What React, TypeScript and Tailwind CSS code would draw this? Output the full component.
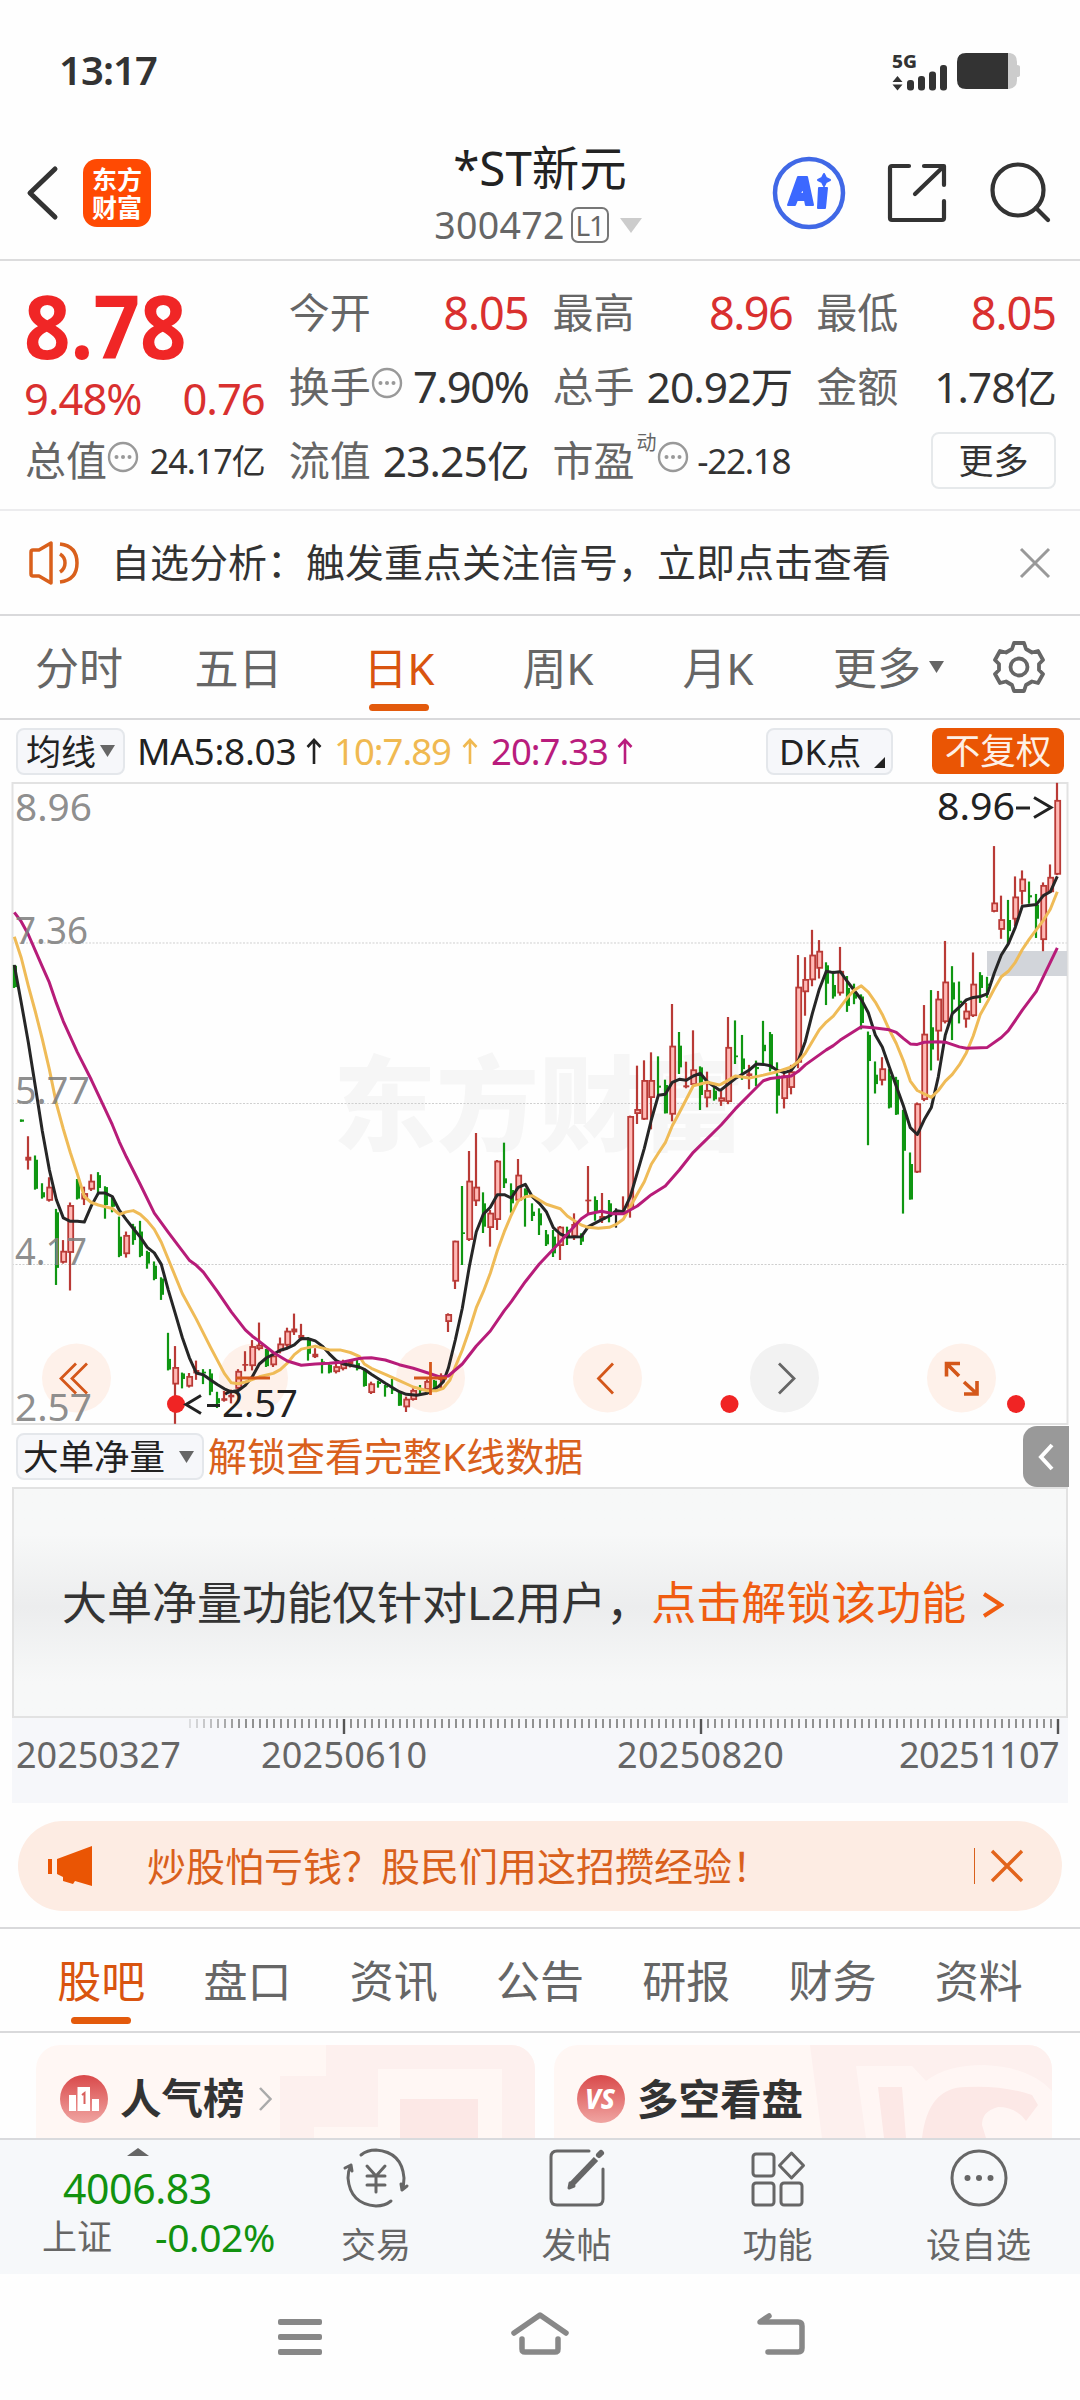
import type { ReactNode } from "react";
import { clsx } from "clsx";

type Candle = [
  color: "r" | "g" | "k",
  high: number,
  low: number,
  top: number,
  bottom: number,
];

interface Segment {
  first: number;
  x0: number;
  y0: number;
  sy: number;
  candles: Candle[];
  ma5: string;
  ma10: string;
  ma20: string;
}

// The history is stored in three pages, every page with its own origin and scale
const segments: Segment[] = [
  {
    first: 0,
    x0: 0,
    y0: 770,
    sy: 2.34,
    candles: [
      ["g", 456, 510, 458, 508], ["g", 818, 823, 818, 823], ["r", 857, 935, 905, 914],
      ["g", 902, 982, 912, 980], ["g", 967, 1003, 988, 1000], ["r", 953, 1010, 975, 1008],
      ["g", 1027, 1205, 1035, 1165], ["r", 1100, 1155, 1125, 1153], ["r", 1012, 1218, 1018, 1130],
      ["g", 957, 1005, 962, 1003], ["r", 975, 1018, 990, 1005], ["r", 946, 985, 961, 982],
      ["g", 941, 995, 948, 978], ["g", 974, 1050, 976, 1018], ["g", 1000, 1035, 1010, 1022],
      ["g", 1045, 1140, 1092, 1137], ["r", 1080, 1141, 1088, 1133], ["g", 1062, 1111, 1068, 1100],
      ["g", 1055, 1140, 1080, 1137], ["g", 1125, 1167, 1128, 1155], ["g", 1150, 1194, 1160, 1191],
      ["g", 1187, 1240, 1190, 1228], ["g", 1317, 1405, 1378, 1403], ["r", 1348, 1530, 1397, 1438],
      ["g", 1410, 1447, 1412, 1425], ["r", 1411, 1445, 1418, 1443], ["r", 1382, 1427, 1404, 1412],
      ["g", 1402, 1437, 1408, 1412], ["g", 1402, 1463, 1412, 1455], ["g", 1455, 1493, 1470, 1482],
      ["r", 1453, 1478, 1470, 1476], ["r", 1450, 1482, 1462, 1468], ["r", 1402, 1450, 1406, 1448],
      ["r", 1360, 1407, 1390, 1394], ["r", 1334, 1405, 1348, 1395], ["r", 1293, 1358, 1345, 1355],
      ["g", 1355, 1397, 1355, 1395], ["r", 1365, 1397, 1370, 1393], ["r", 1328, 1365, 1342, 1360],
      ["r", 1305, 1350, 1312, 1347], ["r", 1272, 1322, 1307, 1316], ["r", 1296, 1335, 1322, 1330],
      ["g", 1327, 1382, 1330, 1366], ["r", 1353, 1376, 1366, 1374], ["g", 1378, 1412, 1384, 1388],
      ["g", 1388, 1412, 1392, 1410], ["r", 1388, 1412, 1395, 1409], ["r", 1380, 1405, 1385, 1402],
      ["r", 1380, 1398, 1383, 1390], ["g", 1380, 1405, 1388, 1402],
    ],
    ma5: "43,456 64,545 85,637 106,740 127,845 148,935 169,1005 190,1048 211,1056 232,1056 253,1058 274,1020 295,990 316,990 337,998 358,1030 379,1052 400,1073 421,1093 442,1117 463,1130 484,1157 505,1217 526,1272 547,1328 568,1375 589,1411 610,1415 631,1427 652,1438 673,1448 694,1455 715,1452 736,1440 757,1420 778,1390 799,1376 820,1367 841,1358 862,1353 883,1345 904,1330 925,1331 946,1336 967,1348 988,1366 1009,1382 1030,1390 1051,1393 1078,1397",
    ma10: "43,390 64,440 85,505 106,565 127,630 148,700 169,780 190,840 211,895 232,945 253,998 274,1012 295,1018 337,1026 358,1040 379,1034 400,1031 421,1040 442,1055 463,1075 484,1105 505,1145 547,1225 589,1285 631,1350 673,1412 694,1434 715,1436 736,1432 778,1420 820,1412 841,1403 862,1388 883,1368 904,1355 946,1348 988,1357 1020,1357 1051,1363 1078,1372",
    ma20: "43,333 64,355 85,385 127,460 148,497 169,545 190,588 232,660 274,725 316,795 337,830 358,870 379,905 421,970 463,1037 505,1082 547,1125 568,1147 589,1159 610,1175 652,1220 694,1268 736,1310 757,1325 778,1337 820,1363 862,1383 904,1393 946,1390 988,1388 1030,1385 1078,1377",
  },
  {
    first: 50,
    x0: 360,
    y0: 970,
    sy: 3,
    candles: [
      ["g", 1200, 1250, 1202, 1248], ["r", 1235, 1272, 1240, 1269], ["g", 1232, 1253, 1236, 1242],
      ["g", 1245, 1280, 1248, 1252], ["g", 1227, 1272, 1255, 1262], ["g", 1268, 1307, 1268, 1307],
      ["r", 1280, 1326, 1286, 1312], ["r", 1255, 1292, 1260, 1290], ["g", 1245, 1275, 1258, 1262],
      ["r", 1228, 1262, 1233, 1260], ["g", 1230, 1260, 1232, 1256], ["r", 1210, 1256, 1216, 1230],
      ["r", 1030, 1086, 1032, 1056], ["r", 812, 957, 812, 935], ["g", 648, 885, 787, 792],
      ["r", 543, 813, 632, 810], ["r", 489, 708, 650, 694], ["g", 667, 789, 700, 770],
      ["r", 720, 830, 728, 774], ["r", 570, 780, 572, 750], ["g", 518, 654, 625, 640],
      ["g", 640, 728, 660, 700], ["r", 567, 695, 614, 692], ["g", 655, 770, 658, 675],
      ["g", 700, 753, 725, 738], ["g", 715, 795, 730, 766], ["g", 780, 828, 793, 823],
      ["g", 780, 861, 800, 850], ["r", 768, 870, 770, 828], ["g", 770, 825, 780, 800],
      ["r", 730, 810, 762, 800], ["g", 790, 825, 797, 815], ["r", 588, 735, 689, 694],
      ["g", 679, 752, 690, 725], ["r", 669, 759, 738, 750], ["g", 690, 757, 700, 740],
      ["k", 715, 773, 722, 727], ["r", 679, 735, 722, 730], ["r", 437, 743, 438, 718],
      ["r", 287, 462, 417, 432], ["r", 271, 450, 330, 449], ["r", 247, 478, 330, 384],
      ["g", 259, 375, 347, 353], ["g", 329, 430, 345, 430], ["r", 102, 454, 227, 434],
      ["g", 186, 312, 227, 292], ["r", 275, 355, 346, 352], ["r", 181, 350, 298, 345],
      ["g", 289, 420, 292, 375], ["r", 305, 412, 360, 385], ["g", 350, 392, 362, 388],
    ],
    ma5: "13,1198 34,1213 76,1240 118,1265 139,1273 170,1276 202,1270 235,1250 250,1235 265,1195 286,1110 307,1015 328,890 349,785 370,733 391,712 412,674 433,674 454,684 475,652 496,643 517,680 538,700 559,725 580,773 601,792 622,801 664,800 685,770 727,748 748,738 769,722 790,725 811,680 832,608 853,535 874,450 895,376 916,373 937,337 958,328 979,331 1000,318 1021,310 1042,335 1078,360",
    ma10: "13,1182 34,1195 76,1213 118,1232 160,1251 202,1262 230,1262 250,1255 270,1230 286,1190 307,1140 328,1080 349,1013 370,965 391,910 412,842 433,785 454,735 475,692 496,680 517,677 538,690 559,703 601,716 622,738 643,752 664,765 685,772 715,775 748,772 769,763 790,748 811,710 832,672 853,635 874,583 895,550 916,518 937,467 958,428 979,388 1000,347 1042,337 1078,345",
    ma20: "13,1164 34,1163 76,1170 118,1184 160,1195 202,1208 244,1222 265,1218 307,1182 349,1128 391,1083 433,1022 454,995 496,935 538,882 580,838 622,792 664,746 685,732 724,724 760,731 790,731 832,708 874,674 916,648 958,600 1000,547 1042,506 1078,470",
  },
  {
    first: 101,
    x0: 720,
    y0: 770,
    sy: 2.34,
    candles: [
      ["r", 750, 786, 766, 776], ["r", 578, 782, 648, 777], ["g", 586, 688, 668, 672],
      ["g", 620, 725, 675, 700], ["r", 690, 747, 710, 716], ["g", 680, 740, 695, 700],
      ["g", 587, 688, 643, 658], ["g", 613, 705, 618, 700], ["g", 684, 804, 715, 762],
      ["r", 708, 792, 715, 770], ["r", 690, 759, 705, 744], ["r", 433, 698, 507, 685],
      ["r", 438, 575, 489, 520], ["r", 374, 506, 432, 492], ["r", 398, 488, 423, 465],
      ["g", 450, 550, 457, 500], ["g", 470, 535, 503, 530], ["r", 414, 528, 470, 523],
      ["g", 482, 566, 510, 552], ["g", 500, 548, 525, 535], ["g", 525, 607, 530, 592],
      ["g", 612, 878, 620, 681], ["g", 682, 757, 713, 735], ["r", 672, 738, 698, 727],
      ["g", 700, 792, 715, 790], ["g", 718, 807, 725, 806], ["g", 795, 1038, 797, 891],
      ["g", 895, 1005, 922, 1005], ["r", 778, 943, 780, 942], ["r", 550, 775, 617, 772],
      ["g", 515, 703, 602, 654], ["r", 517, 680, 535, 612], ["r", 400, 593, 495, 590],
      ["g", 459, 632, 497, 537], ["g", 495, 593, 540, 545], ["r", 545, 603, 563, 584],
      ["r", 427, 578, 500, 576], ["g", 473, 545, 480, 510], ["g", 484, 533, 500, 505],
      ["r", 178, 333, 310, 332], ["r", 294, 395, 349, 374], ["g", 304, 405, 351, 377],
      ["r", 249, 365, 296, 350], ["r", 235, 315, 254, 285], ["g", 261, 313, 293, 298],
      ["g", 290, 393, 315, 348], ["r", 263, 424, 269, 398], ["r", 221, 288, 250, 286],
      ["r", 30, 246, 70, 245],
    ],
    ma5: "4,748 46,722 88,702 109,688 130,689 151,692 172,703 193,708 214,703 235,680 256,635 277,570 298,513 319,471 340,474 361,472 382,495 424,537 445,568 466,620 487,648 508,695 529,740 550,785 571,837 592,853 613,818 634,790 655,718 676,620 697,570 718,555 739,538 760,532 781,530 802,524 823,475 844,433 865,407 886,368 907,319 949,315 970,294 991,285 1012,249",
    ma10: "4,735 46,716 88,721 130,714 172,706 214,695 235,682 256,663 277,635 298,608 319,590 340,576 382,533 403,515 424,505 445,520 466,543 487,572 508,608 529,640 550,680 571,728 592,750 634,766 655,750 676,728 697,712 718,690 739,662 760,622 781,572 802,543 823,512 844,484 865,471 886,450 907,420 928,396 970,352 991,326 1012,285",
    ma20: "4,830 46,793 88,760 130,727 151,722 214,716 235,705 256,690 319,655 340,645 361,632 424,601 466,604 508,608 529,614 550,628 571,641 592,642 613,637 655,636 676,637 718,648 739,651 802,649 844,626 865,610 907,562 949,518 991,450 1012,416",
  },
];

const toPoints = (key: "ma5" | "ma10" | "ma20") =>
  segments
    .flatMap((s) =>
      s[key].split(" ").map((p) => {
        const [x, y] = p.split(",").map(Number);
        return `${(s.x0 + x / 3).toFixed(1)},${(s.y0 + y / s.sy).toFixed(1)}`;
      })
    )
    .join(" ");

const candleColors = { r: "#b93a36", g: "#0f9612", k: "#222222" };

const Candles = () => (
  <g>
    {segments.flatMap((s) =>
      s.candles.map(([c, high, low, top, bottom], i) => {
        const x = 14 + (s.first + i) * 7;
        const y = (v: number) => s.y0 + v / s.sy;
        const h = Math.max((bottom - top) / s.sy, 1.6);
        return (
          <g key={s.first + i}>
            <line
              x1={x}
              x2={x}
              y1={y(high)}
              y2={y(low)}
              stroke={candleColors[c]}
              strokeWidth={2.2}
            />
            {c === "r" && h > 4 ? (
              <rect
                x={x - 1.8}
                y={y(top) + 0.9}
                width={5}
                height={h - 1.8}
                fill="#ffb9b5"
                stroke={candleColors.r}
                strokeWidth={1.8}
              />
            ) : (
              <rect
                x={c === "r" ? x - 2.7 : x - 1}
                y={y(top)}
                width={c === "r" ? 6 : 4}
                height={h}
                fill={candleColors[c]}
              />
            )}
          </g>
        );
      })
    )}
  </g>
);

const Triangle = ({ className }: { className?: string }) => (
  <svg viewBox="0 0 10 8" preserveAspectRatio="none" className={className}>
    <path d="M0 0H10L5 8Z" fill="currentColor" />
  </svg>
);

const Info = () => (
  <svg viewBox="0 0 32 32" className="w-8 h-8 shrink-0" fill="#999">
    <circle cx="16" cy="16" r="14" fill="none" stroke="#999" strokeWidth="2.400" />
    <circle cx="9.5" cy="16" r="2" />
    <circle cx="16" cy="16" r="2" />
    <circle cx="22.5" cy="16" r="2" />
  </svg>
);

const StatusBar = () => (
  <div className="flex justify-between items-start h-[140px] pl-[59px] pr-[60px] text-[#333]">
    <span className="mt-[50px] text-[40px] leading-10 font-semibold tracking-[-0.9px]">
      13:17
    </span>
    <svg viewBox="0 0 130 44" className="mt-[50px] w-[130px] h-11 overflow-visible" fill="#333">
      <text
        x="2"
        y="17.5"
        fontSize="18.5"
        fontWeight="800"
        textLength="25"
        lengthAdjust="spacingAndGlyphs"
      >
        5G
      </text>
      <path d="M2.5 32L7.5 26L12.500 32ZM2.500 34.500H12.500L7.500 40.500Z" />
      <rect x="17" y="30" width="7" height="10.500" rx="3" />
      <rect x="28" y="26" width="7" height="14.500" rx="3" />
      <rect x="39" y="21.500" width="7" height="19" rx="3" />
      <rect x="50" y="15" width="7" height="25.500" rx="3" />
      <path d="M118 3H120Q127 4 127 12V15Q130 15 130 17V25Q130 27 127 27V30Q127 38 119 39H118Z" fill="#ccc" />
      <path d="M76 3H118V39H76Q67 39 67 30V12Q67 3 76 3Z" />
    </svg>
  </div>
);

const Header = () => (
  <header className="flex items-center h-[121px] pb-[13px] border-b-2 border-[#dcdcdd]">
    <svg
      viewBox="0 0 34 56"
      className="ml-[26px] w-[34px] h-14"
      fill="none"
      stroke="#333"
      strokeWidth="5"
      strokeLinecap="round"
      strokeLinejoin="round"
    >
      <path d="M29 4L4 28L29 52" />
    </svg>
    <div className="flex flex-col justify-center items-center ml-[23px] w-[68px] h-[68px] rounded-[14px] bg-[#ff4a03] text-white text-[25px] leading-[28px] font-bold">
      <span>东方</span>
      <span>财富</span>
    </div>
    <div className="flex flex-col items-center ml-[274px] w-[230px]">
      <span className="text-[47.500px] leading-[62px] text-[#222] whitespace-nowrap">
        *ST新元
      </span>
      <div className="flex items-center mt-0.5 -ml-1 h-12 text-[#666]">
        <span className="text-[37.500px] leading-10 tracking-[0.3px]">300472</span>
        <span className="flex justify-center items-center ml-1.5 w-[38px] h-[36px] rounded-[7px] border-2 border-[#777] text-[28px] leading-none tracking-[-1px]">
          L1
        </span>
        <Triangle className="ml-[11px] w-[22px] h-[15px] text-[#ccc]" />
      </div>
    </div>
    <svg viewBox="0 0 74 74" className="ml-[117px] w-[74px] h-[74px]">
      <circle cx="37" cy="37" r="34" fill="none" stroke="#4068e6" strokeWidth="4.500" />
      <path
        fill="#3c68ff"
        fillRule="evenodd"
        stroke="#3c68ff"
        strokeWidth="2"
        strokeLinejoin="round"
        d="M26 21H35L41 49H34L33 44H25L23 49H16ZM31 30L28 38H32ZM47 32H55L53 52H46ZM52 18L54 22L58 24L54 26L52 30L50 26L46 24L50 22Z"
      />
    </svg>
    <svg
      viewBox="0 0 62 62"
      className="ml-[40px] w-[62px] h-[62px]"
      fill="none"
      stroke="#333"
      strokeWidth="4.200"
      strokeLinecap="round"
      strokeLinejoin="round"
    >
      <path d="M23 4H6Q4 4 4 6V56Q4 58 6 58H56Q58 58 58 56V39M38 4H58V23M57 5L29 32" />
    </svg>
    <svg
      viewBox="0 0 62 62"
      className="ml-[42px] w-[62px] h-[62px]"
      fill="none"
      stroke="#333"
      strokeWidth="4.200"
      strokeLinecap="round"
    >
      <circle cx="28" cy="28" r="25.500" />
      <path d="M46 46L58 58" />
    </svg>
  </header>
);

interface CellProps {
  label: string;
  children: ReactNode;
  info?: boolean;
  className?: string;
}

const Cell = ({ label, children, info, className }: CellProps) => (
  <div className="flex items-center h-[74px] whitespace-nowrap">
    <span className="-ml-px text-[41px] text-[#666]">{label}</span>
    {info && (
      <span className="flex items-center mb-2">
        <Info />
      </span>
    )}
    <span className={clsx("ml-auto -mr-0.5", className)}>{children}</span>
  </div>
);

const Quote = () => (
  <section className="grid grid-cols-4 gap-x-[27px] px-[26px] pt-[15px] h-[250px] border-b-2 border-[#ececee]">
    <div>
      <div className="flex items-center h-[98px] -ml-0.5">
        <span className="inline-block text-[88px] leading-none font-bold text-[#f02626] origin-left scale-x-[0.925]">
          8.78
        </span>
      </div>
      <div className="flex justify-between items-center -ml-0.5 h-[50px] text-[43.500px] tracking-[-1px] text-[#d9302f]">
        <span>9.48%</span>
        <span className="-mr-0.5">0.76</span>
      </div>
      <Cell label="总值" info className="text-[34px] tracking-[-1px] text-[#333]">
        24.17亿
      </Cell>
    </div>
    <div>
      <Cell label="今开" className="text-[45px] tracking-[-1px] text-[#d9302f]">8.05</Cell>
      <Cell label="换手" info className="text-[43.500px] tracking-[-1.400px] text-[#333]">7.90%</Cell>
      <Cell label="流值" className="text-[42.500px] tracking-[-0.9px] text-[#333]">23.25亿</Cell>
    </div>
    <div>
      <Cell label="最高" className="text-[45px] tracking-[-1.500px] text-[#d9302f]">8.96</Cell>
      <Cell label="总手" className="text-[42.500px] tracking-[-0.9px] text-[#333]">20.92万</Cell>
      <div className="flex items-center h-[74px] whitespace-nowrap">
        <span className="-ml-px text-[41px] text-[#666]">市盈</span>
        <span className="ml-0.5 mb-9 text-[20px] text-[#666]">动</span>
        <span className="mb-2">
          <Info />
        </span>
        <span className="ml-auto text-[35px] tracking-[-1.300px] text-[#333]">-22.18</span>
      </div>
    </div>
    <div>
      <Cell label="最低" className="text-[45px] tracking-[-1px] text-[#d9302f]">8.05</Cell>
      <Cell label="金额" className="text-[42.500px] tracking-[-1px] text-[#333]">1.78亿</Cell>
      <div className="flex justify-end items-center h-[72px]">
        <button className="-mr-0.5 w-[125px] h-[57px] rounded-lg border-2 border-[#e6e9eb] text-[35px] leading-none text-[#333]">
          更多
        </button>
      </div>
    </div>
  </section>
);

const Notice = () => (
  <div className="flex items-center h-[105px] pl-[27px] pr-[29px] border-b-2 border-[#d9d9db]">
    <svg
      viewBox="0 0 54 46"
      className="w-[54px] h-[46px]"
      fill="none"
      stroke="#d9601c"
      strokeWidth="3.500"
      strokeLinejoin="round"
    >
      <path d="M4 12Q4 10 6 10H12L24 3V43L12 36H6Q4 36 4 34Z" />
      <path d="M33 14Q38 17 38 23Q38 29 33 32M33 4Q50 6 50 23Q50 40 33 42" />
    </svg>
    <span className="ml-[30px] text-[39px] text-[#333]">
      自选分析：触发重点关注信号，立即点击查看
    </span>
    <svg viewBox="0 0 32 32" className="ml-auto w-8 h-8" stroke="#999" strokeWidth="3">
      <path d="M2 2L30 30M30 2L2 30" />
    </svg>
  </div>
);

const periods = [
  { name: "分时", box: "w-[158px]" },
  { name: "五日", box: "w-[161px]" },
  { name: "日K", box: "w-[160px]", active: true },
  { name: "周K", box: "w-[158px]" },
  { name: "月K", box: "w-[162px]" },
];

const Periods = () => (
  <nav className="flex h-[104px] text-[44px] text-[#666] border-b-2 border-[#d9d9db]">
    {periods.map(({ name, box, active }) => (
      <div
        key={name}
        className={clsx(
          "flex flex-col items-center",
          box,
          active && "text-[#d9540f]"
        )}
      >
        <span className="mt-[19px] leading-[66px]">{name}</span>
        {active && <span className="mt-[3px] w-[60px] h-[7px] rounded-full bg-[#e35a0c]" />}
      </div>
    ))}
    <div className="flex items-start ml-[34px]">
      <span className="mt-[19px] leading-[66px]">更多</span>
      <Triangle className="mt-[45px] ml-[8px] w-[15px] h-[12px]" />
    </div>
    <svg
      viewBox="0 0 54 54"
      className="mt-[24px] ml-[48px] w-[54px] h-[54px]"
      fill="none"
      stroke="#666"
      strokeWidth="3.800"
      strokeLinejoin="round"
    >
      <path d="M22 3H32L34 9L40 12.500L46 11L51 20L47 24V30L51 34L46 43L40 41.500L34 45L32 51H22L20 45L14 41.500L8 43L3 34L7 30V24L3 20L8 11L14 12.500L20 9Z" />
      <circle cx="27" cy="27" r="8.500" />
    </svg>
  </nav>
);

const UpArrow = ({ className }: { className?: string }) => (
  <svg
    viewBox="0 0 16 28"
    className={clsx("w-4 h-7 shrink-0", className)}
    fill="none"
    stroke="currentColor"
    strokeWidth="2.600"
  >
    <path d="M8 27V3M1.500 10L8 3L14.500 10" />
  </svg>
);

const Averages = () => (
  <div className="flex items-center h-[62px] pl-4 pr-4 text-[35px] text-[#222] whitespace-nowrap">
    <button className="flex items-center w-[109px] h-[47px] pl-[8px] rounded-lg border-2 border-[#e4e7eb] bg-[#f6f7fa] leading-none">
      均线
      <Triangle className="ml-[4px] w-[15px] h-[12px] text-[#666]" />
    </button>
    <span className="ml-[12px] w-[165px] text-[37px] tracking-[-0.3px]">MA5:8.03</span>
    <UpArrow className="ml-[4px]" />
    <span className="ml-[12px] w-[126px] text-[36.500px] tracking-[-1px] text-[#f0b951]">10:7.89</span>
    <UpArrow className="ml-[2px] text-[#f0b951]" />
    <span className="ml-[13px] w-[116px] text-[36.500px] tracking-[-1px] text-[#b91c7d]">20:7.33</span>
    <UpArrow className="ml-[10px] text-[#b91c7d]" />
    <button className="flex items-center ml-auto w-[127px] h-[47px] pl-[11px] rounded-lg border-2 border-[#e4e7eb] bg-[#f6f7fa] leading-none">
      DK点
      <svg viewBox="0 0 11 11" className="mt-[22px] ml-[13px] w-[11px] h-[11px]">
        <path d="M11 0V11H0Z" fill="#222" />
      </svg>
    </button>
    <button className="ml-[39px] w-[132px] h-[46px] rounded-lg bg-[#ea5504] text-[35.500px] leading-none text-[#fdf0e6]">
      不复权
    </button>
  </div>
);

const axis = [
  { label: "8.96", y: 821, w: 77 },
  { label: "7.36", y: 944, w: 73 },
  { label: "5.77", y: 1104, w: 75 },
  { label: "4.17", y: 1265, w: 72 },
  { label: "2.57", y: 1421, w: 77 },
];

const Chart = () => (
  <svg viewBox="0 782 1080 644" className="block w-[1080px] h-[644px] overflow-visible">
    <text
      x="333"
      y="1143"
      fontSize="103"
      fontWeight="900"
      fill="#f6f6f6"
      textLength="412"
    >
      东方财富
    </text>
    <g stroke="#cfcfcf" strokeWidth="1" strokeDasharray="2 1.500">
      <path d="M12 943H1067M12 1103.500H1067M12 1264.500H1067" />
    </g>
    <rect x="12.500" y="783" width="1055" height="641" fill="none" stroke="#e2e2e2" strokeWidth="2" />
    <rect x="987" y="951" width="80" height="25" fill="#d2d5da" />
    {[76.5, 253.5, 430.5, 607.5, 784.5, 961.5].map((cx) => (
      <circle key={cx} cx={cx} cy="1378" r="34.500" fill={cx === 784.5 ? "#f2f2f2" : "#fef1ea"} />
    ))}
    <Candles />
    <g fill="none" strokeWidth="3" strokeLinejoin="round">
      <polyline points={toPoints("ma5")} stroke="#262626" />
      <polyline points={toPoints("ma10")} stroke="#efbb57" />
      <polyline points={toPoints("ma20")} stroke="#b71c79" />
    </g>
    {axis.map(({ label, y, w }) => (
      <text
        key={label}
        x="15"
        y={y}
        fontSize="38"
        fill="#808080"
        fillOpacity="0.9"
        textLength={w}
        lengthAdjust="spacingAndGlyphs"
      >
        {label}
      </text>
    ))}
    <g fill="none" stroke="#d4571a" strokeWidth="2.800">
      <path d="M76 1363.500L61 1378.500L76 1393.500M87 1363.500L72 1378.500L87 1393.500" />
      <path d="M236 1378H270" />
      <path d="M414 1378H447M430.500 1362V1395" />
      <path d="M613 1363.500L598.500 1378.500L613 1393.500" />
      <path d="M779 1363.500L794 1378.500L779 1393.500" stroke="#666" />
      <path d="M960 1363.500H946.500V1376.500M947 1364L959 1376M964 1394H977V1381M976 1393L964 1382" strokeWidth="3.600" />
    </g>
    <circle cx="176" cy="1404" r="9" fill="#f02424" />
    <circle cx="729.500" cy="1404" r="9" fill="#f02424" />
    <circle cx="1016" cy="1404" r="9" fill="#f02424" />
    <g fill="none" stroke="#222" strokeWidth="3">
      <path d="M201 1395.500L186 1404.500L201 1413.500M207 1405.500H220" />
      <path d="M1016 808H1030M1034 797.500L1051 807.500L1034 817.500" />
    </g>
    <text x="222" y="1417" fontSize="38" fill="#222" textLength="76" lengthAdjust="spacingAndGlyphs">
      2.57
    </text>
    <text x="937" y="820" fontSize="38" fill="#222" textLength="78" lengthAdjust="spacingAndGlyphs">
      8.96
    </text>
  </svg>
);

const SubIndicator = () => (
  <section className="px-3">
    <div className="flex items-center h-[61px] pl-1">
      <button className="flex items-center w-[188px] h-[47px] pl-[5px] rounded-lg border-2 border-[#e4e7eb] bg-[#f6f7fa] text-[35.500px] leading-none text-[#222] whitespace-nowrap">
        大单净量
        <Triangle className="ml-[14px] w-[15px] h-[12px] text-[#666]" />
      </button>
      <span className="ml-[4px] text-[39px] text-[#d9601c]">解锁查看完整K线数据</span>
      <div className="flex justify-center items-center ml-auto -mr-px w-[46px] h-[61px] rounded-l-[14px] bg-[#999]">
        <svg viewBox="0 0 18 30" className="w-[18px] h-[30px]" fill="none" stroke="#fff" strokeWidth="4">
          <path d="M15 3L4 15L15 27" />
        </svg>
      </div>
    </div>
    <div className="flex items-center h-[231px] pl-[48px] border-2 border-[#e2e2e2] bg-linear-to-b from-[#f7f8f8] from-20% via-[#ecedee] via-52% to-[#f7f8f8] to-85% text-[45px] whitespace-nowrap text-[#333]">
      大单净量功能仅针对L2用户，
      <span className="text-[#f05c10]">点击解锁该功能</span>
      <svg viewBox="0 0 22 28" className="ml-[16px] mt-1 w-[22px] h-7" fill="none" stroke="#f05c10" strokeWidth="4">
        <path d="M2 3L19 14L2 25" />
      </svg>
    </div>
    <div className="h-[85px] bg-[#f6f7fa] text-[36px] text-[#666]">
      <svg viewBox="12 1718 1056 18" className="block w-[1056px] h-[18px]">
        {Array.from({ length: 125 }, (_, i) => {
          const x = 190 + i * 7;
          const long = x === 344 || x === 701 || x === 1058;
          return (
            <line
              key={x}
              x1={x}
              x2={x}
              y1="1719"
              y2={long ? 1734 : 1728}
              stroke={long ? "#555" : "#777"}
              strokeWidth={long ? 2.4 : 1.6}
              opacity={Math.min(1, 0.25 + i * 0.1)}
            />
          );
        })}
      </svg>
      <div className="flex -mt-px pl-[4px] leading-[40px]">
        <span className="w-[245px]">20250327</span>
        <span className="w-[356px] tracking-[0.2px]">20250610</span>
        <span className="w-[282px] tracking-[0.3px]">20250820</span>
        <span className="tracking-[-0.6px]">20251107</span>
      </div>
    </div>
  </section>
);

const Promo = () => (
  <div className="flex items-center mx-[18px] mt-[18px] h-[90px] pl-[29px] rounded-full bg-[#fdece3] text-[#d9601c]">
    <svg viewBox="0 0 48 40" className="w-12 h-10" fill="#ea5504">
      <path d="M1 13H5V28H1ZM10 13L45 0V40L28 35L26 38L16 35V31L10 28Z" />
    </svg>
    <span className="ml-[52px] text-[39px]">炒股怕亏钱？股民们用这招攒经验！</span>
    <span className="ml-auto w-px h-9 bg-[#d9601c]" />
    <svg viewBox="0 0 34 34" className="ml-[15px] mr-[38px] w-[34px] h-[34px]" stroke="#e2641c" strokeWidth="3.400">
      <path d="M2 2L32 32M32 2L2 32" />
    </svg>
  </div>
);

const tabs = ["股吧", "盘口", "资讯", "公告", "研报", "财务", "资料"];

const Tabs = () => (
  <nav className="flex mt-4 h-[106px] pl-[28px] pr-[28px] border-y-2 border-[#d9d9db] text-[44px] text-[#666]">
    {tabs.map((tab, i) => (
      <div
        key={tab}
        className={clsx("flex flex-col items-center w-[146.300px]", i === 0 && "text-[#d9540f]")}
      >
        <span className="mt-[19px] leading-[66px]">{tab}</span>
        {i === 0 && <span className="mt-[3px] w-[60px] h-[7px] rounded-full bg-[#e35a0c]" />}
      </div>
    ))}
  </nav>
);

const Cards = () => (
  <div className="flex gap-[19px] h-[105px] pt-[12px] pl-9 pr-7 text-[41.500px] font-bold text-[#333] overflow-hidden">
    <div className="relative flex items-start w-[499px] h-40 rounded-[24px] bg-[#fff7f4] overflow-hidden">
      <svg viewBox="0 0 499 93" className="absolute top-0 left-0 w-[499px] h-[93px]">
        <path d="M290 0H499V93H466V24H342V82H278V93H244V31H290Z" fill="#fdf0ee" />
        <path d="M364 54H442V93H364Z" fill="#fce8e6" />
      </svg>
      <svg viewBox="0 0 48 48" className="relative mt-[30px] ml-6 w-12 h-12">
        <defs>
          <linearGradient id="badge" x1="0" y1="0" x2="0" y2="1">
            <stop offset="0" stopColor="#d9494a" />
            <stop offset="1" stopColor="#f0a5a2" />
          </linearGradient>
        </defs>
        <circle cx="24" cy="24" r="24" fill="url(#badge)" />
        <path d="M9 20H16V36H9ZM17.500 12H30V36H17.500ZM32 24H39V36H32Z" fill="#fff" />
        <path d="M22 20L24.500 18V29" stroke="#d9605e" strokeWidth="2" fill="none" />
      </svg>
      <span className="relative mt-[22px] ml-[12px] leading-[62px]">人气榜</span>
      <svg viewBox="0 0 15 26" className="relative mt-[41px] ml-[13px] w-[15px] h-[26px]" fill="none" stroke="#aaa" strokeWidth="2.500">
        <path d="M2 2L12.500 13L2 24" />
      </svg>
    </div>
    <div className="relative flex items-start w-[498px] h-40 rounded-[24px] bg-[#fff7f4] overflow-hidden">
      <svg viewBox="0 0 498 93" className="absolute top-0 left-0 w-[498px] h-[93px]">
        <path d="M256 0H498V93H268Z" fill="#fdf0ee" />
        <path d="M302 21H358L372 36Q392 20 430 20Q476 22 498 46V93H312Z" fill="#fff6f4" />
        <path d="M324 42H348L352 93H330ZM368 93Q374 42 412 42Q448 40 478 50L484 60L472 76Q462 62 444 62Q428 66 428 80L432 93Z" fill="#fce8e6" />
      </svg>
      <svg viewBox="0 0 48 48" className="relative mt-[30px] ml-[23px] w-12 h-12">
        <circle cx="24" cy="24" r="24" fill="url(#badge)" />
        <text
          x="8"
          y="34"
          fontSize="28"
          fontStyle="italic"
          fontWeight="800"
          fill="#fff"
          textLength="30"
          lengthAdjust="spacingAndGlyphs"
        >
          VS
        </text>
      </svg>
      <span className="relative mt-[23px] ml-[12px] leading-[62px]">多空看盘</span>
    </div>
  </div>
);

interface ActionProps {
  label: string;
  className: string;
  children: ReactNode;
}

const Action = ({ label, className, children }: ActionProps) => (
  <div className={clsx("flex flex-col items-center", className)}>
    <svg
      viewBox="0 0 68 62"
      className="mt-[7px] w-[68px] h-[62px]"
      fill="none"
      stroke="#666"
      strokeWidth="3"
      strokeLinecap="round"
      strokeLinejoin="round"
    >
      {children}
    </svg>
    <span className="mt-[10px] text-[35px] leading-[52px]">{label}</span>
  </div>
);

const BottomBar = () => (
  <footer className="flex h-[136px] bg-[#f6f8fa] border-t-2 border-[#d9dadd] text-[#666]">
    <div className="flex flex-col w-[275px]">
      <Triangle className="mt-[8px] ml-[127px] w-[22px] h-[8px] rotate-180" />
      <span className="mt-[12px] pl-[63px] text-[41px] leading-[40px] tracking-[-0.4px] text-[#12920f]">
        4006.83
      </span>
      <div className="flex justify-between pl-[42px] pt-[2px] text-[35px] leading-[54px]">
        <span>上证</span>
        <span className="text-[39px] tracking-[-0.4px] text-[#12920f]">-0.02%</span>
      </div>
    </div>
    <Action label="交易" className="ml-px w-[200px]">
      <path d="M19 8Q25 3 34 3Q60 5 62 31Q62 38 60 43L65 39M60 43L59 37M49 54Q43 59 34 59Q8 57 6 31Q6 24 9 18L3 21M9 18L10 24" />
      <path d="M25 19L34 29L43 19M34 29V45M25 29H43M25 38H43" />
    </Action>
    <Action label="发帖" className="w-[201px]">
      <path d="M46 4H14Q8 4 8 10V52Q8 58 14 58H54Q60 58 60 52V22" />
      <path d="M28 38L53 12" strokeWidth="6" strokeLinecap="butt" />
      <path d="M26 41L27 36L31 39Z" fill="#666" />
      <path d="M56 8L58 6" strokeWidth="6" />
    </Action>
    <Action label="功能" className="w-[201px]">
      <rect x="9" y="7" width="21" height="22" rx="3" />
      <rect x="9" y="36" width="21" height="22" rx="3" />
      <rect x="37" y="36" width="21" height="22" rx="3" />
      <path d="M47.500 6L59.500 18.500L47.500 31L35.500 18.500Z" />
    </Action>
    <Action label="设自选" className="w-[201px]">
      <circle cx="34" cy="31" r="27" />
      <g fill="#666" stroke="none">
        <circle cx="22.500" cy="31" r="3" />
        <circle cx="34" cy="31" r="3" />
        <circle cx="45.500" cy="31" r="3" />
      </g>
    </Action>
  </footer>
);

const SystemNav = () => (
  <div className="flex h-[126px] pt-[36px]">
    <svg viewBox="0 0 46 50" className="ml-[277px] w-[46px] h-[50px]" fill="#888">
      <rect x="1" y="9" width="44" height="6" rx="2" />
      <rect x="1" y="24" width="44" height="6" rx="2" />
      <rect x="1" y="39" width="44" height="6" rx="2" />
    </svg>
    <svg
      viewBox="0 0 60 50"
      className="ml-[187px] w-[60px] h-[50px]"
      fill="none"
      stroke="#888"
      strokeWidth="5.500"
      strokeLinecap="round"
      strokeLinejoin="round"
    >
      <path d="M4 23L30 5L56 23M12 29V39Q12 42 15 42H45Q48 42 48 39V29" />
    </svg>
    <svg
      viewBox="0 0 52 50"
      className="ml-[185px] w-[52px] h-[50px]"
      fill="none"
      stroke="#888"
      strokeWidth="5.500"
      strokeLinecap="round"
      strokeLinejoin="round"
    >
      <path d="M13 42H43Q47 42 47 38V16Q47 12 43 12H5L14 6" />
    </svg>
  </div>
);

export default function App() {
  return (
    <main className="w-[1080px] h-[2400px] bg-[#fefefe] overflow-hidden font-['Noto_Sans','Noto_Sans_CJK_SC',sans-serif]">
      <StatusBar />
      <Header />
      <Quote />
      <Notice />
      <Periods />
      <Averages />
      <Chart />
      <SubIndicator />
      <Promo />
      <Tabs />
      <Cards />
      <BottomBar />
      <SystemNav />
    </main>
  );
}
